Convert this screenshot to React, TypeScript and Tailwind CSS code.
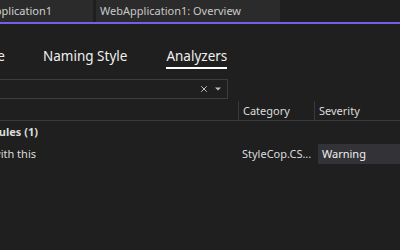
import { X } from "lucide-react";

export default function App() {
    return (
        <div
            className="w-[400px] h-[250px] overflow-hidden bg-[#1f1f1f] text-[#dcdcdc]"
            style={{ fontFamily: '"Noto Sans", "Open Sans", sans-serif' }}
        >
            {/* Document tabs */}
            <div className="flex h-[22px] gap-[3px] text-[11px]">
                <div className="w-[93px] bg-[#2b2b2b] flex items-center justify-end pr-[41px] overflow-hidden whitespace-nowrap text-[#d0d0d0]">
                    WebApplication1
                </div>
                <div className="w-[184px] bg-[#2b2b2b] flex items-center pl-[4px] whitespace-nowrap text-[#c8c8c8]">
                    WebApplication1: Overview
                </div>
            </div>
            <div className="h-[2px] bg-[#7160e8]" />

            {/* Page tabs */}
            <div className="flex items-start h-[55px] pt-[22px] text-[13.5px] text-[#f0f0f0]">
                <div className="w-[5px] flex justify-end overflow-hidden whitespace-nowrap leading-[20px]">
                    Code Style
                </div>
                <div className="ml-[38px] leading-[20px] whitespace-nowrap">Naming Style</div>
                <div className="ml-[39px] flex flex-col">
                    <span className="leading-[20px] whitespace-nowrap">Analyzers</span>
                    <span className="mt-[1px] h-[2px] bg-white" />
                </div>
            </div>

            {/* Search box */}
            <div className="-ml-px w-[229px] h-[20px] border border-[#3d3d3d] flex items-center justify-end gap-[6px] pr-[6px]">
                <X size={10} strokeWidth={2.2} className="text-[#cfcfcf]" />
                <svg width="6" height="4" viewBox="0 0 6 4">
                    <path d="M0 0.5 H6 L3 3.5 Z" fill="#bcbcbc" />
                </svg>
            </div>

            {/* Grid header */}
            <div className="flex h-[20px] mt-[2px] border-b border-[#3a3a3a] text-[11px]">
                <div className="w-[238px]" />
                <div className="w-[76px] border-l border-[#3a3a3a] flex items-center pl-[4px] pt-[2px]">Category</div>
                <div className="flex-1 border-l border-[#3a3a3a] flex items-center pl-[4px] pt-[2px]">Severity</div>
            </div>

            {/* Group row */}
            <div className="h-[22px] flex items-center text-[11px] font-bold whitespace-nowrap">
                <div className="w-[38px] flex justify-end overflow-hidden">Style Rules (1)</div>
            </div>

            {/* Rule row */}
            <div className="flex items-center h-[22px] text-[11px] whitespace-nowrap">
                <div className="w-[238px] flex">
                    <div className="w-[36px] flex justify-end overflow-hidden">Use braces with this</div>
                </div>
                <div className="w-[76px] pl-[4px]">StyleCop.CS...</div>
                <div className="flex-1 h-[20px] ml-[4px] bg-[#333337] flex items-center pl-[4px] text-[#f0f0f0]">
                    Warning
                </div>
            </div>
        </div>
    );
}
